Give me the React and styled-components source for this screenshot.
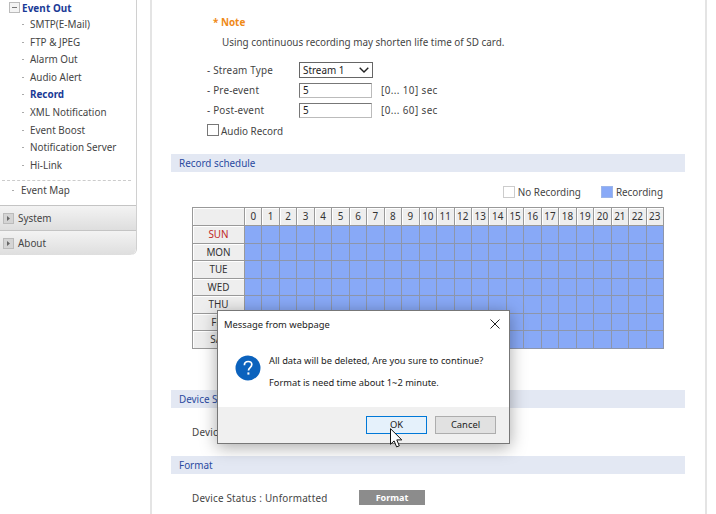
import styled, { createGlobalStyle } from 'styled-components';

const FONT = '"Noto Sans", "Open Sans", sans-serif';

const GlobalStyle = createGlobalStyle`
  html, body {
    margin: 0;
    padding: 0;
    background: #fff;
  }
  body {
    width: 716px;
    height: 514px;
    overflow: hidden;
    font-family: ${FONT};
    font-size: 9.9px;
    color: #444;
  }
`;

const subMenu = ['SMTP(E-Mail)', 'FTP & JPEG', 'Alarm Out', 'Audio Alert', 'Record', 'XML Notification', 'Event Boost', 'Notification Server', 'Hi-Link'];
const days = ['SUN', 'MON', 'TUE', 'WED', 'THU', 'FRI', 'SAT'];
const hours = Array.from({ length: 24 }, (_, i) => i);

function BoxIcon ({ minus }) {
  return (
    <svg width="11" height="11" viewBox="0 0 11 11">
      <rect x="0.5" y="0.5" width="10" height="10" fill={minus ? '#f4f4f4' : '#d4d4d4'} stroke="#bbb" />
      {minus
        ? <path d="M3 5.5h5" stroke="#777" />
        : <path d="M4 3l3 2.5L4 8z" fill="#666" />}
    </svg>
  );
}

function QuestionIcon () {
  return (
    <svg width="26" height="26" viewBox="0 0 26 26">
      <circle cx="13" cy="13" r="12.5" fill="#0b62bd" />
      <path d="M9.4 10.2c0-2.3 1.6-3.7 3.8-3.7 2.2 0 3.6 1.3 3.6 3.1 0 1.5-.8 2.3-1.9 3.2-1 .8-1.4 1.4-1.4 2.8" fill="none" stroke="#fff" strokeWidth="1.7" />
      <rect x="12.4" y="17.4" width="2" height="2.2" fill="#fff" />
    </svg>
  );
}

function CloseIcon () {
  return (
    <svg width="10" height="10" viewBox="0 0 10 10">
      <path d="M.5.5l9 9M9.5.5l-9 9" stroke="#222" strokeWidth="1" fill="none" />
    </svg>
  );
}

function App () {
  return (
    <Page>
      <GlobalStyle />
      <Sidebar>
        <GroupTitle><BoxIcon minus />Event Out</GroupTitle>
        <SubList>
          {subMenu.map((name) => (
            <SubItem key={name} $active={name === 'Record'}>{name}</SubItem>
          ))}
        </SubList>
        <EventMap>Event Map</EventMap>
        <Accordion><BoxIcon />System</Accordion>
        <Accordion $last><BoxIcon />About</Accordion>
      </Sidebar>

      <Content>
        <Note>* Note</Note>
        <NoteText>Using continuous recording may shorten life time of SD card.</NoteText>
        <Form>
          <FormRow>
            <FormLabel>- Stream Type</FormLabel>
            <FakeSelect>Stream 1
              <svg width="10" height="6" viewBox="0 0 10 6"><path d="M.7.7L5 5l4.3-4.3" fill="none" stroke="#222" strokeWidth="1.4" /></svg>
            </FakeSelect>
          </FormRow>
          <FormRow>
            <FormLabel>- Pre-event</FormLabel>
            <FakeInput>5</FakeInput>
            <Range>[0... 10] sec</Range>
          </FormRow>
          <FormRow>
            <FormLabel>- Post-event</FormLabel>
            <FakeInput>5</FakeInput>
            <Range>[0... 60] sec</Range>
          </FormRow>
          <CheckRow><CheckBox />Audio Record</CheckRow>
        </Form>

        <SectionTitle>Record schedule</SectionTitle>
        <Legend>
          <LegendItem><Swatch />No Recording</LegendItem>
          <LegendItem><Swatch $on />Recording</LegendItem>
        </Legend>
        <Schedule>
          <Corner />
          {hours.map((h) => <HourCell key={h}>{h}</HourCell>)}
          {days.map((d) => (
            <DayRow key={d}>
              <DayCell $sun={d === 'SUN'}>{d}</DayCell>
              {hours.map((h) => <SlotCell key={h} />)}
            </DayRow>
          ))}
        </Schedule>

        <SectionTitle $top="41px">Device Setup</SectionTitle>
        <StatusLine $h="48px">Device Type : SD Card</StatusLine>
        <SectionTitle>Format</SectionTitle>
        <StatusLine $h="48px">
          <StatusText>Device Status : Unformatted</StatusText>
          <FormatButton>Format</FormatButton>
        </StatusLine>
      </Content>

      <Dialog>
        <DialogHead>
          Message from webpage
          <CloseIcon />
        </DialogHead>
        <DialogBody>
          <QuestionIcon />
          <DialogText>
            <p>All data will be deleted, Are you sure to continue?</p>
            <p>Format is need time about 1~2 minute.</p>
          </DialogText>
        </DialogBody>
        <DialogFoot>
          <DialogButton $primary>OK</DialogButton>
          <DialogButton>Cancel</DialogButton>
        </DialogFoot>
      </Dialog>
      <Cursor width="13" height="20" viewBox="0 0 13 20">
        <path d="M.5.7v15.6l3.6-3.4 2.5 6 2.7-1.1-2.5-5.9h5z" fill="#fff" stroke="#111" strokeWidth="1" />
      </Cursor>
    </Page>
  );
}

export default App;

const Page = styled.div`
  position: relative;
  width: 716px;
  height: 514px;
  display: flex;
  align-items: flex-start;
  overflow: hidden;
`;

const Sidebar = styled.div`
  width: 136px;
  flex: none;
  border-right: 1px solid #d0d0d0;
  border-bottom-right-radius: 6px;
  overflow: hidden;
`;

const GroupTitle = styled.div`
  height: 15px;
  padding-left: 9px;
  display: flex;
  align-items: center;
  gap: 2px;
  font-weight: 700;
  letter-spacing: 0.1px;
  color: #1a3a96;
`;

const SubList = styled.div`
  padding-top: 1px;
  margin-bottom: 6px;
`;

const SubItem = styled.div`
  height: 17.6px;
  line-height: 17.6px;
  padding-left: 30px;
  position: relative;
  font-weight: ${(p) => (p.$active ? 700 : 400)};
  color: ${(p) => (p.$active ? '#1a3a96' : '#444')};
  &::before {
    content: '';
    position: absolute;
    left: 22px;
    top: 8px;
    width: 2px;
    height: 1px;
    background: #aaa;
  }
`;

const EventMap = styled.div`
  height: 24px;
  line-height: 18px;
  padding-left: 19px;
  border-top: 1px dashed #ccc;
  margin: 0 5px 0 2px;
  position: relative;
  &::before {
    content: '';
    position: absolute;
    left: 10px;
    top: 9px;
    width: 2px;
    height: 1px;
    background: #aaa;
  }
`;

const Accordion = styled.div`
  height: 24px;
  display: flex;
  align-items: center;
  gap: 4px;
  padding-left: 3px;
  background: linear-gradient(#f3f3f3, #dedede);
  border-top: 1px solid #c4c4c4;
  border-bottom-right-radius: ${(p) => (p.$last ? '6px' : '0')};
`;

const Content = styled.div`
  width: 557px;
  height: 514px;
  margin-left: 13px;
  flex: none;
  box-sizing: border-box;
  border-left: 2px solid #e4e4e4;
  border-right: 2px solid #e4e4e4;
  padding: 0 20px 0 19px;
  overflow: hidden;
`;

const Note = styled.div`
  margin: 15px 0 0 42px;
  height: 15px;
  line-height: 15px;
  font-weight: 700;
  color: #ef8a17;
`;

const NoteText = styled.div`
  margin: 5px 0 0 51px;
  height: 15px;
  line-height: 15px;
`;

const Form = styled.div`
  margin: 10px 0 0 36px;
  height: 94px;
`;

const FormRow = styled.div`
  height: 20px;
  display: flex;
  align-items: center;
`;

const FormLabel = styled.div`
  width: 92px;
  letter-spacing: 0.2px;
`;

const FakeSelect = styled.div`
  width: 69px;
  height: 14px;
  border: 1px solid #666;
  background: #fff;
  color: #222;
  padding-left: 3px;
  display: flex;
  align-items: center;
  justify-content: space-between;
  svg { margin-right: 3px; }
`;

const FakeInput = styled.div`
  width: 68px;
  height: 13px;
  line-height: 13px;
  border: 1px solid #777;
  border-right-color: #bbb;
  border-bottom-color: #bbb;
  padding-left: 3px;
  color: #222;
`;

const Range = styled.div`
  margin-left: 9px;
  letter-spacing: 0.4px;
`;

const CheckRow = styled.div`
  height: 22px;
  display: flex;
  align-items: center;
`;

const CheckBox = styled.div`
  width: 10px;
  height: 10px;
  margin-right: 2px;
  margin-top: -3px;
  border: 1px solid #777;
  background: #fff;
`;

const SectionTitle = styled.div`
  height: 18px;
  line-height: 18px;
  margin-top: ${(p) => p.$top || '0'};
  padding-left: 8px;
  background: #e3e8f3;
  color: #2a4aa0;
`;

const Legend = styled.div`
  height: 35px;
  box-sizing: border-box;
  padding: 5px 22px 0 0;
  display: flex;
  justify-content: flex-end;
  align-items: center;
  gap: 20px;
`;

const LegendItem = styled.div`
  display: flex;
  align-items: center;
  gap: 3px;
`;

const Swatch = styled.span`
  width: 10px;
  height: 10px;
  border: 1px solid ${(p) => (p.$on ? '#9db6ea' : '#ccc')};
  background: ${(p) => (p.$on ? '#88a9f7' : '#fff')};
`;

const Schedule = styled.div`
  width: 472px;
  margin-left: 21px;
  display: grid;
  grid-template-columns: 52px repeat(24, 1fr);
  grid-template-rows: 18px;
  grid-auto-rows: 17.5px;
  border-top: 1px solid #999;
  border-left: 1px solid #999;
  box-sizing: border-box;
`;

const Corner = styled.div`
  background: #eee;
  border-right: 1px solid #999;
  border-bottom: 1px solid #999;
  box-shadow: inset 1px 1px #fff;
`;

const HourCell = styled(Corner)`
  color: #333;
  text-align: center;
  line-height: 17px;
`;

const DayRow = styled.div`
  display: contents;
`;

const DayCell = styled(Corner)`
  text-align: center;
  line-height: 16px;
  color: ${(p) => (p.$sun ? '#c0271f' : '#333')};
`;

const SlotCell = styled.div`
  background: #88a9f7;
  border-right: 1px solid #8d96ab;
  border-bottom: 1px solid #8d96ab;
`;

const StatusLine = styled.div`
  height: ${(p) => p.$h};
  display: flex;
  align-items: center;
  padding-left: 21px;
  letter-spacing: 0.2px;
`;

const StatusText = styled.div`
  width: 167px;
`;

const FormatButton = styled.div`
  width: 66px;
  height: 15px;
  line-height: 15px;
  text-align: center;
  background: #8c8c8c;
  color: #fff;
  font-weight: 700;
  font-size: 9px;
  letter-spacing: 0;
`;

const Dialog = styled.div`
  position: absolute;
  left: 217px;
  top: 310px;
  width: 293px;
  height: 134px;
  box-sizing: border-box;
  border: 1px solid #777;
  background: #fff;
  box-shadow: 0 3px 16px rgba(0, 0, 0, 0.35);
  display: flex;
  flex-direction: column;
  font-size: 9.4px;
  color: #222;
`;

const DialogHead = styled.div`
  height: 26px;
  flex: none;
  display: flex;
  align-items: center;
  justify-content: space-between;
  padding: 0 9px 0 6px;
`;

const DialogBody = styled.div`
  flex: 1;
  display: flex;
  align-items: flex-start;
  padding: 18px 0 0 17px;
  gap: 8px;
`;

const DialogText = styled.div`
  margin-top: -2px;
  white-space: nowrap;
  font-size: 9.3px;
  p {
    margin: 0 0 7px;
    line-height: 15px;
  }
`;

const DialogFoot = styled.div`
  height: 36px;
  flex: none;
  box-sizing: border-box;
  background: #f0f0f0;
  display: flex;
  justify-content: flex-end;
  align-items: flex-start;
  gap: 8px;
  padding: 9px 13px 0 0;
`;

const DialogButton = styled.div`
  width: 61px;
  height: 18px;
  line-height: 16px;
  box-sizing: border-box;
  text-align: center;
  background: ${(p) => (p.$primary ? '#e5f1fb' : '#e1e1e1')};
  border: 1px solid ${(p) => (p.$primary ? '#0078d7' : '#adadad')};
`;

const Cursor = styled.svg`
  position: absolute;
  left: 390px;
  top: 428px;
`;
